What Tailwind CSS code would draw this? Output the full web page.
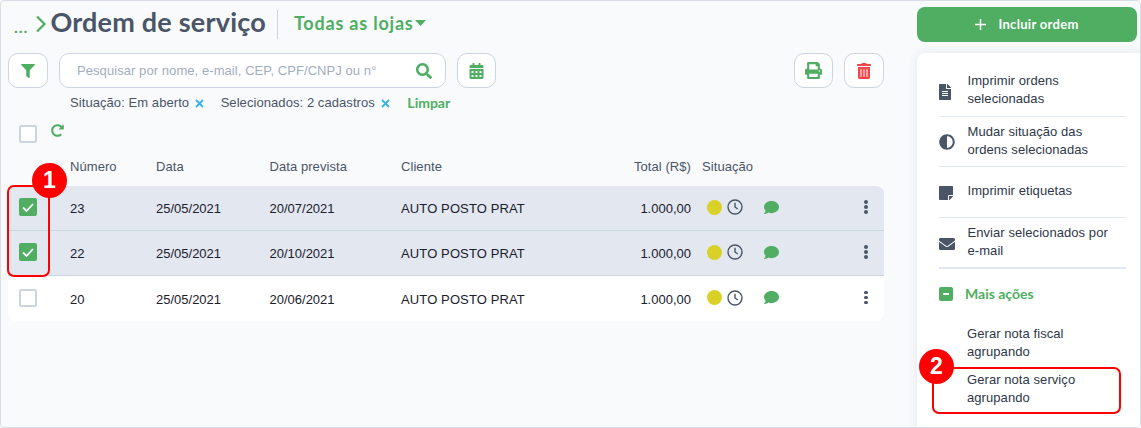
<!DOCTYPE html>
<html lang="pt-BR">
<head>
  <meta charset="UTF-8">
  <title>Ordem de serviço</title>
  <script src="https://cdn.jsdelivr.net/npm/@tailwindcss/browser@4"></script>
</head>
<body class="bg-white font-['Liberation_Sans',sans-serif] text-[13px] text-[#4a5568] tracking-[0.07px]">
  <div class="relative w-[1141px] h-[428px] overflow-hidden bg-[#f8fafc] border border-[#d9dee6] rounded-[4px] flex">

    <!-- main -->
    <main class="w-[883px] pl-[7px] shrink-0">
      <div class="flex items-center h-[32px] mt-[7px] pl-[6px]">
        <span class="text-[#4fae62] font-['Lato',sans-serif] font-bold text-[16px] mt-[6px] tracking-[1px]">...</span>
        <svg class="w-[12px] h-[18px] ml-[7px] text-[#4fae62]" viewBox="0 0 12 18" fill="none" stroke="currentColor" stroke-width="2.2"><path d="M2 1.5l7.5 7.5L2 16.5"/></svg>
        <h1 class="ml-[3px] -mt-[4px] font-['Lato',sans-serif] font-bold text-[27px] text-[#4a5568] tracking-[0.2px]">Ordem de serviço</h1>
        <div class="w-px h-[29px] bg-[#cbd5e0] ml-[11px]"></div>
        <span class="ml-[16px] -mt-[2px] font-['Lato',sans-serif] font-bold text-[18px] text-[#4fae62] tracking-[0.8px]">Todas as lojas</span>
        <svg class="ml-[1px] -mt-[2px] w-[11px] h-[6px] text-[#4fae62]" viewBox="0 0 11 6"><path fill="currentColor" d="M0 0h11L5.5 6z"/></svg>
      </div>

      <div class="flex items-center mt-[13px] h-[35px]">
        <button class="w-[40px] h-[35px] bg-white border border-[#cbd5e0] rounded-[10px] flex items-center justify-center">
          <svg class="w-[14px] h-[14px] text-[#4fae62]" viewBox="0 0 512 512"><path fill="currentColor" d="M487.976 0H24.028C2.71 0-8.047 25.866 7.058 40.971L192 225.941V432c0 7.831 3.821 15.17 10.237 19.662l80 55.98C298.02 518.69 320 507.493 320 487.98V225.941l184.947-184.97C520.021 25.896 509.338 0 487.976 0z"/></svg>
        </button>
        <div class="ml-[11px] w-[387px] h-[35px] bg-white border border-[#cbd5e0] rounded-[10px] flex items-center pl-[17px] pr-[13px]">
          <span class="flex-1 text-[#a0aec0] text-[13px]">Pesquisar por nome, e-mail, CEP, CPF/CNPJ ou n°</span>
          <svg class="w-[16px] h-[16px] text-[#4fae62]" viewBox="0 0 512 512"><path fill="currentColor" d="M505 442.7L405.3 343c-4.5-4.5-10.6-7-17-7H372c27.6-35.3 44-79.7 44-128C416 93.1 322.9 0 208 0S0 93.1 0 208s93.1 208 208 208c48.3 0 92.7-16.4 128-44v16.3c0 6.4 2.5 12.5 7 17l99.7 99.7c9.4 9.4 24.6 9.4 33.9 0l28.3-28.3c9.4-9.4 9.4-24.6.1-34zM208 336c-70.7 0-128-57.2-128-128 0-70.7 57.2-128 128-128 70.7 0 128 57.2 128 128 0 70.7-57.2 128-128 128z"/></svg>
        </div>
        <button class="ml-[11px] w-[39px] h-[35px] bg-white border border-[#cbd5e0] rounded-[10px] flex items-center justify-center">
          <svg class="w-[15px] h-[16px] text-[#4fae62]" viewBox="0 0 448 512"><path fill="currentColor" d="M0 464c0 26.5 21.5 48 48 48h352c26.5 0 48-21.5 48-48V192H0v272zm320-196c0-6.6 5.4-12 12-12h40c6.6 0 12 5.4 12 12v40c0 6.6-5.4 12-12 12h-40c-6.6 0-12-5.4-12-12v-40zm0 128c0-6.6 5.4-12 12-12h40c6.6 0 12 5.4 12 12v40c0 6.6-5.4 12-12 12h-40c-6.6 0-12-5.4-12-12v-40zM192 268c0-6.6 5.4-12 12-12h40c6.6 0 12 5.4 12 12v40c0 6.6-5.4 12-12 12h-40c-6.6 0-12-5.4-12-12v-40zm0 128c0-6.6 5.4-12 12-12h40c6.6 0 12 5.4 12 12v40c0 6.6-5.4 12-12 12h-40c-6.6 0-12-5.4-12-12v-40zM64 268c0-6.6 5.4-12 12-12h40c6.6 0 12 5.4 12 12v40c0 6.6-5.4 12-12 12H76c-6.6 0-12-5.4-12-12v-40zm0 128c0-6.6 5.4-12 12-12h40c6.6 0 12 5.4 12 12v40c0 6.6-5.4 12-12 12H76c-6.6 0-12-5.4-12-12v-40zM400 64h-48V16c0-8.8-7.2-16-16-16h-32c-8.8 0-16 7.2-16 16v48H160V16c0-8.8-7.2-16-16-16h-32c-8.8 0-16 7.2-16 16v48H48C21.5 64 0 85.5 0 112v48h448v-48c0-26.5-21.5-48-48-48z"/></svg>
        </button>
        <div class="flex-1"></div>
        <button class="w-[39px] h-[35px] bg-white border border-[#cbd5e0] rounded-[10px] flex items-center justify-center">
          <svg class="w-[17px] h-[17px] text-[#4fae62]" viewBox="0 0 512 512"><path fill="currentColor" d="M448 192V77.25c0-8.49-3.37-16.62-9.37-22.63L393.37 9.37c-6-6-14.14-9.37-22.63-9.37H96C78.33 0 64 14.33 64 32v160c-35.35 0-64 28.65-64 64v112c0 8.84 7.16 16 16 16h48v96c0 17.67 14.33 32 32 32h320c17.67 0 32-14.33 32-32v-96h48c8.84 0 16-7.16 16-16V256c0-35.35-28.65-64-64-64zm-64 256H128v-96h256v96zm0-224H128V64h192v48c0 8.84 7.16 16 16 16h48v96zm48 72c-13.25 0-24-10.75-24-24 0-13.26 10.75-24 24-24s24 10.74 24 24c0 13.25-10.75 24-24 24z"/></svg>
        </button>
        <button class="ml-[11px] w-[40px] h-[35px] bg-white border border-[#cbd5e0] rounded-[10px] flex items-center justify-center">
          <svg class="w-[14px] h-[16px] text-[#f6444b]" viewBox="0 0 448 512"><path fill="currentColor" d="M32 464a48 48 0 0 0 48 48h288a48 48 0 0 0 48-48V128H32zm272-256a16 16 0 0 1 32 0v224a16 16 0 0 1-32 0zm-96 0a16 16 0 0 1 32 0v224a16 16 0 0 1-32 0zm-96 0a16 16 0 0 1 32 0v224a16 16 0 0 1-32 0zM432 32H312l-9.4-18.7A24 24 0 0 0 281.1 0H166.8a23.72 23.72 0 0 0-21.4 13.3L136 32H16A16 16 0 0 0 0 48v32a16 16 0 0 0 16 16h416a16 16 0 0 0 16-16V48a16 16 0 0 0-16-16z"/></svg>
        </button>
      </div>

      <div class="flex items-center h-[16px] mt-[7px] pl-[62px]">
        <span>Situação: Em aberto</span>
        <svg class="ml-[5.5px] w-[9px] h-[9px] text-[#38b2e8]" viewBox="0 0 9 9" fill="none" stroke="currentColor" stroke-width="1.8"><path d="M1 1l7 7M8 1L1 8"/></svg>
        <span class="ml-[17px]">Selecionados: 2 cadastros</span>
        <svg class="ml-[6px] w-[9px] h-[9px] text-[#38b2e8]" viewBox="0 0 9 9" fill="none" stroke="currentColor" stroke-width="1.8"><path d="M1 1l7 7M8 1L1 8"/></svg>
        <span class="ml-[17.5px] -mt-[1px] font-['Lato',sans-serif] font-bold text-[14px] text-[#4fae62] tracking-normal">Limpar</span>
      </div>

      <div class="flex items-start h-[20px] mt-[13px] pl-[11px]">
        <span class="w-[18px] h-[18px] mt-[1px] bg-white border-2 border-[#cbd5e0] rounded-[2px]"></span>
        <svg class="ml-[14px] w-[13px] h-[13px] text-[#4fae62]" viewBox="0 0 512 512"><path fill="currentColor" d="M256.455 8c66.269.119 126.437 26.233 170.859 68.685l35.715-35.715C478.149 25.851 504 36.559 504 57.941V192c0 13.255-10.745 24-24 24H345.941c-21.382 0-32.09-25.851-16.971-40.971l41.75-41.75c-30.864-28.899-70.801-44.907-113.23-45.273-92.398-.798-170.283 73.977-169.484 169.442C88.764 348.009 162.184 424 256 424c41.127 0 79.997-14.678 110.629-41.556 4.743-4.161 11.906-3.908 16.368.553l39.662 39.662c4.872 4.872 4.631 12.815-.482 17.433C378.202 479.813 319.926 504 256 504 119.034 504 8.001 392.967 8 256.002 7.999 119.193 119.646 7.755 256.455 8z"/></svg>
      </div>

      <div class="grid grid-cols-[62px_86px_113.5px_131.5px_190px_100px_1fr] h-[17px] mt-[13px] items-center">
        <span></span>
        <span>Número</span>
        <span>Data</span>
        <span>Data prevista</span>
        <span>Cliente</span>
        <span class="text-right">Total (R$)</span>
        <span class="ml-[11px]">Situação</span>
      </div>

      <div class="mt-[12px] rounded-[8px] overflow-hidden text-[#1a202c] tracking-normal">
        <div class="grid grid-cols-[62px_86px_113.5px_131.5px_190px_100px_1fr] h-[45px] pt-[2px] items-center bg-[#e2e7f0] border-b border-[#cbd5e0]">
          <span class="ml-[11px] -mt-[4px] w-[18px] h-[18px] bg-[#4fae62] rounded-[2px] flex items-center justify-center">
            <svg class="w-[12px] h-[9px] text-white" viewBox="0 0 12 9" fill="none" stroke="currentColor" stroke-width="1.8"><path d="M1 4.5l3.5 3.5L11 1"/></svg>
          </span>
          <span>23</span>
          <span>25/05/2021</span>
          <span>20/07/2021</span>
          <span class="tracking-[0.12px]">AUTO POSTO PRAT</span>
          <span class="text-right">1.000,00</span>
          <div class="flex items-center -mt-[4px] pr-[16px]">
            <span class="ml-[16px] w-[15px] h-[15px] rounded-full bg-[#d9d127]"></span>
            <svg class="ml-[5px] w-[16px] h-[16px] text-[#4a5568]" viewBox="0 0 16 16" fill="none" stroke="currentColor" stroke-width="1.4"><circle cx="8" cy="8" r="7"/><path d="M8 3.8V8l2.8 2"/></svg>
            <svg class="ml-[21px] w-[15px] h-[15px] text-[#4fae62]" viewBox="0 0 512 512"><path fill="currentColor" d="M256 32C114.6 32 0 125.1 0 240c0 49.6 21.4 95 57 130.7C44.5 421.1 2.7 466 2.2 466.5c-2.2 2.3-2.8 5.7-1.5 8.7S4.8 480 8 480c66.3 0 116-31.8 140.6-51.4 32.7 12.3 69 19.4 107.4 19.4 141.4 0 256-93.1 256-208S397.4 32 256 32z"/></svg>
            <span class="ml-auto w-[4px] flex flex-col gap-[1.5px]"><i class="w-[3.5px] h-[3.5px] rounded-full bg-[#4a5568]"></i><i class="w-[3.5px] h-[3.5px] rounded-full bg-[#4a5568]"></i><i class="w-[3.5px] h-[3.5px] rounded-full bg-[#4a5568]"></i></span>
          </div>
        </div>
        <div class="grid grid-cols-[62px_86px_113.5px_131.5px_190px_100px_1fr] h-[45px] pt-[2px] items-center bg-[#e2e7f0] border-b border-[#cbd5e0]">
          <span class="ml-[11px] -mt-[4px] w-[18px] h-[18px] bg-[#4fae62] rounded-[2px] flex items-center justify-center">
            <svg class="w-[12px] h-[9px] text-white" viewBox="0 0 12 9" fill="none" stroke="currentColor" stroke-width="1.8"><path d="M1 4.5l3.5 3.5L11 1"/></svg>
          </span>
          <span>22</span>
          <span>25/05/2021</span>
          <span>20/10/2021</span>
          <span class="tracking-[0.12px]">AUTO POSTO PRAT</span>
          <span class="text-right">1.000,00</span>
          <div class="flex items-center -mt-[4px] pr-[16px]">
            <span class="ml-[16px] w-[15px] h-[15px] rounded-full bg-[#d9d127]"></span>
            <svg class="ml-[5px] w-[16px] h-[16px] text-[#4a5568]" viewBox="0 0 16 16" fill="none" stroke="currentColor" stroke-width="1.4"><circle cx="8" cy="8" r="7"/><path d="M8 3.8V8l2.8 2"/></svg>
            <svg class="ml-[21px] w-[15px] h-[15px] text-[#4fae62]" viewBox="0 0 512 512"><path fill="currentColor" d="M256 32C114.6 32 0 125.1 0 240c0 49.6 21.4 95 57 130.7C44.5 421.1 2.7 466 2.2 466.5c-2.2 2.3-2.8 5.7-1.5 8.7S4.8 480 8 480c66.3 0 116-31.8 140.6-51.4 32.7 12.3 69 19.4 107.4 19.4 141.4 0 256-93.1 256-208S397.4 32 256 32z"/></svg>
            <span class="ml-auto w-[4px] flex flex-col gap-[1.5px]"><i class="w-[3.5px] h-[3.5px] rounded-full bg-[#4a5568]"></i><i class="w-[3.5px] h-[3.5px] rounded-full bg-[#4a5568]"></i><i class="w-[3.5px] h-[3.5px] rounded-full bg-[#4a5568]"></i></span>
          </div>
        </div>
        <div class="grid grid-cols-[62px_86px_113.5px_131.5px_190px_100px_1fr] h-[45px] pt-[2px] items-center bg-white">
          <span class="ml-[11px] -mt-[3px] w-[18px] h-[18px] bg-white border-2 border-[#cbd5e0] rounded-[2px]"></span>
          <span>20</span>
          <span>25/05/2021</span>
          <span>20/06/2021</span>
          <span class="tracking-[0.12px]">AUTO POSTO PRAT</span>
          <span class="text-right">1.000,00</span>
          <div class="flex items-center -mt-[4px] pr-[16px]">
            <span class="ml-[16px] w-[15px] h-[15px] rounded-full bg-[#d9d127]"></span>
            <svg class="ml-[5px] w-[16px] h-[16px] text-[#4a5568]" viewBox="0 0 16 16" fill="none" stroke="currentColor" stroke-width="1.4"><circle cx="8" cy="8" r="7"/><path d="M8 3.8V8l2.8 2"/></svg>
            <svg class="ml-[21px] w-[15px] h-[15px] text-[#4fae62]" viewBox="0 0 512 512"><path fill="currentColor" d="M256 32C114.6 32 0 125.1 0 240c0 49.6 21.4 95 57 130.7C44.5 421.1 2.7 466 2.2 466.5c-2.2 2.3-2.8 5.7-1.5 8.7S4.8 480 8 480c66.3 0 116-31.8 140.6-51.4 32.7 12.3 69 19.4 107.4 19.4 141.4 0 256-93.1 256-208S397.4 32 256 32z"/></svg>
            <span class="ml-auto w-[4px] flex flex-col gap-[1.5px]"><i class="w-[3.5px] h-[3.5px] rounded-full bg-[#4a5568]"></i><i class="w-[3.5px] h-[3.5px] rounded-full bg-[#4a5568]"></i><i class="w-[3.5px] h-[3.5px] rounded-full bg-[#4a5568]"></i></span>
          </div>
        </div>
      </div>
    </main>

    <!-- side -->
    <aside class="flex-1 pl-[33px] pt-[6px]">
      <button class="w-[220px] h-[35px] bg-[#4fae62] rounded-[8px] text-white flex items-center justify-center font-['Lato',sans-serif] font-bold text-[13px] tracking-[0.3px]">
        <svg class="w-[11px] h-[11px] mr-[12px]" viewBox="0 0 11 11" fill="none" stroke="currentColor" stroke-width="1.5"><path d="M5.5 0v11M0 5.5h11"/></svg>
        Incluir ordem
      </button>
      <div class="mt-[11px] w-[230px] h-[400px] bg-white rounded-[8px] shadow-[0_0_8px_rgba(74,85,104,0.12)] pl-[22px] pr-[21px] text-[13px] leading-[18px] text-[#2d3748]">
        <div class="flex items-center h-[64px] border-b border-[#e2e8f0] pt-[10px]">
          <svg class="mt-[4px] w-[12px] h-[16px] text-[#4a5568] shrink-0" viewBox="0 0 384 512"><path fill="currentColor" d="M224 136V0H24C10.7 0 0 10.7 0 24v464c0 13.3 10.7 24 24 24h336c13.3 0 24-10.7 24-24V160H248c-13.2 0-24-10.8-24-24zm64 236c0 6.6-5.4 12-12 12H108c-6.6 0-12-5.4-12-12v-8c0-6.6 5.4-12 12-12h168c6.6 0 12 5.4 12 12v8zm0-64c0 6.6-5.4 12-12 12H108c-6.6 0-12-5.4-12-12v-8c0-6.6 5.4-12 12-12h168c6.6 0 12 5.4 12 12v8zm0-72v8c0 6.6-5.4 12-12 12H108c-6.6 0-12-5.4-12-12v-8c0-6.6 5.4-12 12-12h168c6.6 0 12 5.4 12 12zm96-114.1v6.1H256V0h6.1c6.4 0 12.5 2.5 17 7l97.9 98c4.5 4.5 7 10.6 7 16.9z"/></svg>
          <span class="ml-[16.5px]">Imprimir ordens<br>selecionadas</span>
        </div>
        <div class="flex items-center h-[50px] border-b border-[#e2e8f0] pb-[2px]">
          <svg class="mt-[2px] w-[16px] h-[16px] text-[#4a5568] shrink-0" viewBox="0 0 512 512"><path fill="currentColor" d="M8 256c0 136.966 111.033 248 248 248s248-111.034 248-248S392.966 8 256 8 8 119.033 8 256zm248 184V72c101.705 0 184 82.311 184 184 0 101.705-82.311 184-184 184z"/></svg>
          <span class="ml-[12.5px]">Mudar situação das<br>ordens selecionadas</span>
        </div>
        <div class="flex items-center h-[51px] border-b border-[#e2e8f0] pb-[2px]">
          <svg class="mt-[3px] w-[14px] h-[16px] text-[#4a5568] shrink-0" viewBox="0 0 448 512"><path fill="currentColor" d="M312 320h136V56c0-13.3-10.7-24-24-24H24C10.7 32 0 42.7 0 56v400c0 13.3 10.7 24 24 24h264V344c0-13.2 10.8-24 24-24zm129 55l-98 98c-4.5 4.5-10.6 7-17 7h-6v-128h128v6.1c0 6.3-2.5 12.4-7 16.9z"/></svg>
          <span class="ml-[14.5px]">Imprimir etiquetas</span>
        </div>
        <div class="flex items-center h-[51px] border-b-2 border-[#e2e8f0] pb-[2px]">
          <svg class="mt-[4px] w-[16px] h-[16px] text-[#4a5568] shrink-0" viewBox="0 0 512 512"><path fill="currentColor" d="M502.3 190.8c3.9-3.1 9.7-.2 9.7 4.7V400c0 26.5-21.5 48-48 48H48c-26.5 0-48-21.5-48-48V195.6c0-5 5.7-7.8 9.7-4.7 22.4 17.4 52.1 39.5 154.1 113.6 21.1 15.4 56.7 47.8 92.2 47.6 35.7.3 72-32.8 92.3-47.6 102-74.1 131.6-96.3 154-113.7zM256 320c23.2.4 56.6-29.2 73.4-41.4 132.7-96.3 142.8-104.7 173.4-128.7 5.8-4.5 9.2-11.5 9.2-18.9v-19c0-26.5-21.5-48-48-48H48C21.5 64 0 85.5 0 112v19c0 7.4 3.4 14.3 9.2 18.9 30.6 23.9 40.7 32.4 173.4 128.7 16.8 12.2 50.2 41.8 73.4 41.4z"/></svg>
          <span class="ml-[12.5px]">Enviar selecionados por<br>e-mail</span>
        </div>
        <div class="flex items-center h-[50px]">
          <span class="w-[14px] h-[14px] bg-[#4fae62] rounded-[2px] flex items-center justify-center"><span class="w-[6px] h-[2px] bg-white"></span></span>
          <span class="ml-[12px] font-['Lato',sans-serif] font-bold text-[14px] text-[#4fae62] tracking-normal">Mais ações</span>
        </div>
        <div class="mt-[6px] ml-[28px] h-[46px]">Gerar nota fiscal<br>agrupando</div>
        <div class="ml-[28px]">Gerar nota serviço<br>agrupando</div>
      </div>
    </aside>

    <!-- annotations -->
    <div class="absolute left-[6px] top-[184px] w-[43px] h-[92px] border-2 border-[#fe0000] rounded-[7px]"></div>
    <div class="absolute left-[31px] top-[162px] w-[35px] h-[35px] rounded-full bg-[#fe0000] text-white font-bold text-[23px] flex items-center justify-center">1</div>
    <div class="absolute left-[931px] top-[366px] w-[189px] h-[47px] border-2 border-[#fe0000] rounded-[7px]"></div>
    <div class="absolute left-[918px] top-[348px] w-[35px] h-[35px] rounded-full bg-[#fe0000] text-white font-bold text-[23px] flex items-center justify-center">2</div>
  </div>
</body>
</html>
